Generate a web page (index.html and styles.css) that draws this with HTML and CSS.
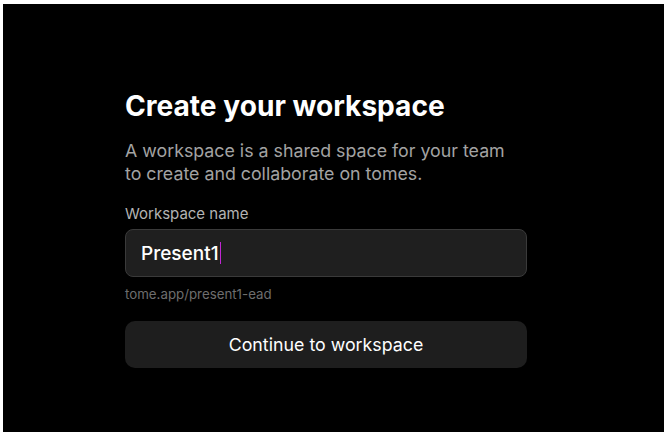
FILE: index.html
```html
<!DOCTYPE html>
<html lang="en">
<head>
<meta charset="utf-8">
<title>Create your workspace</title>
<link rel="stylesheet" href="styles.css">
</head>
<body>
<div class="frame">
  <main class="panel">
    <h1 class="title">Create your workspace</h1>
    <p class="lead">A workspace is a shared space for your team<br>to create and collaborate on tomes.</p>
    <label class="label" for="ws">Workspace name</label>
    <div class="field" id="ws"><span class="value">Present1</span><span class="caret"></span></div>
    <div class="hint">tome.app/present1-ead</div>
    <button class="btn" type="button">Continue to workspace</button>
  </main>
</div>
</body>
</html>
```
FILE: styles.css
```css
html, body {
  margin: 0;
  padding: 0;
  background: #ffffff;
}
body {
  padding: 4px 4px 5px 3px;
  font-family: Inter, "Noto Sans", sans-serif;
}
.frame {
  background: #000000;
  height: 428px;
  padding: 0 0 0 122px;
  box-sizing: border-box;
  overflow: hidden;
}
.panel {
  width: 402px;
  display: flex;
  flex-direction: column;
  padding-top: 85px;
}
.title {
  margin: 0;
  font-size: 28.1px;
  line-height: 34px;
  font-weight: 700;
  color: #ffffff;
}
.lead {
  margin: 16px 0 0;
  font-size: 17.8px;
  line-height: 23px;
  color: #a3a3a3;
}
.label {
  margin-top: 20px;
  font-size: 15px;
  line-height: 18px;
  color: #b3b3b3;
}
.field {
  margin-top: 6px;
  height: 48px;
  box-sizing: border-box;
  border: 1px solid #3a3a3a;
  border-radius: 8px;
  background: #1f1f1f;
  display: flex;
  align-items: center;
  padding-left: 15px;
}
.value {
  font-size: 19px;
  color: #ffffff;
  font-weight: 500;
}
.caret {
  width: 1.5px;
  height: 22px;
  background: #c026d3;
  margin-left: 1px;
}
.hint {
  margin-top: 9px;
  font-size: 13.3px;
  line-height: 16px;
  color: #6e6e6e;
}
.btn {
  margin-top: 19px;
  height: 47px;
  border: 0;
  border-radius: 10px;
  background: #1e1e1e;
  color: #ffffff;
  font-family: inherit;
  font-size: 17.8px;
  font-weight: 400;
}
```
